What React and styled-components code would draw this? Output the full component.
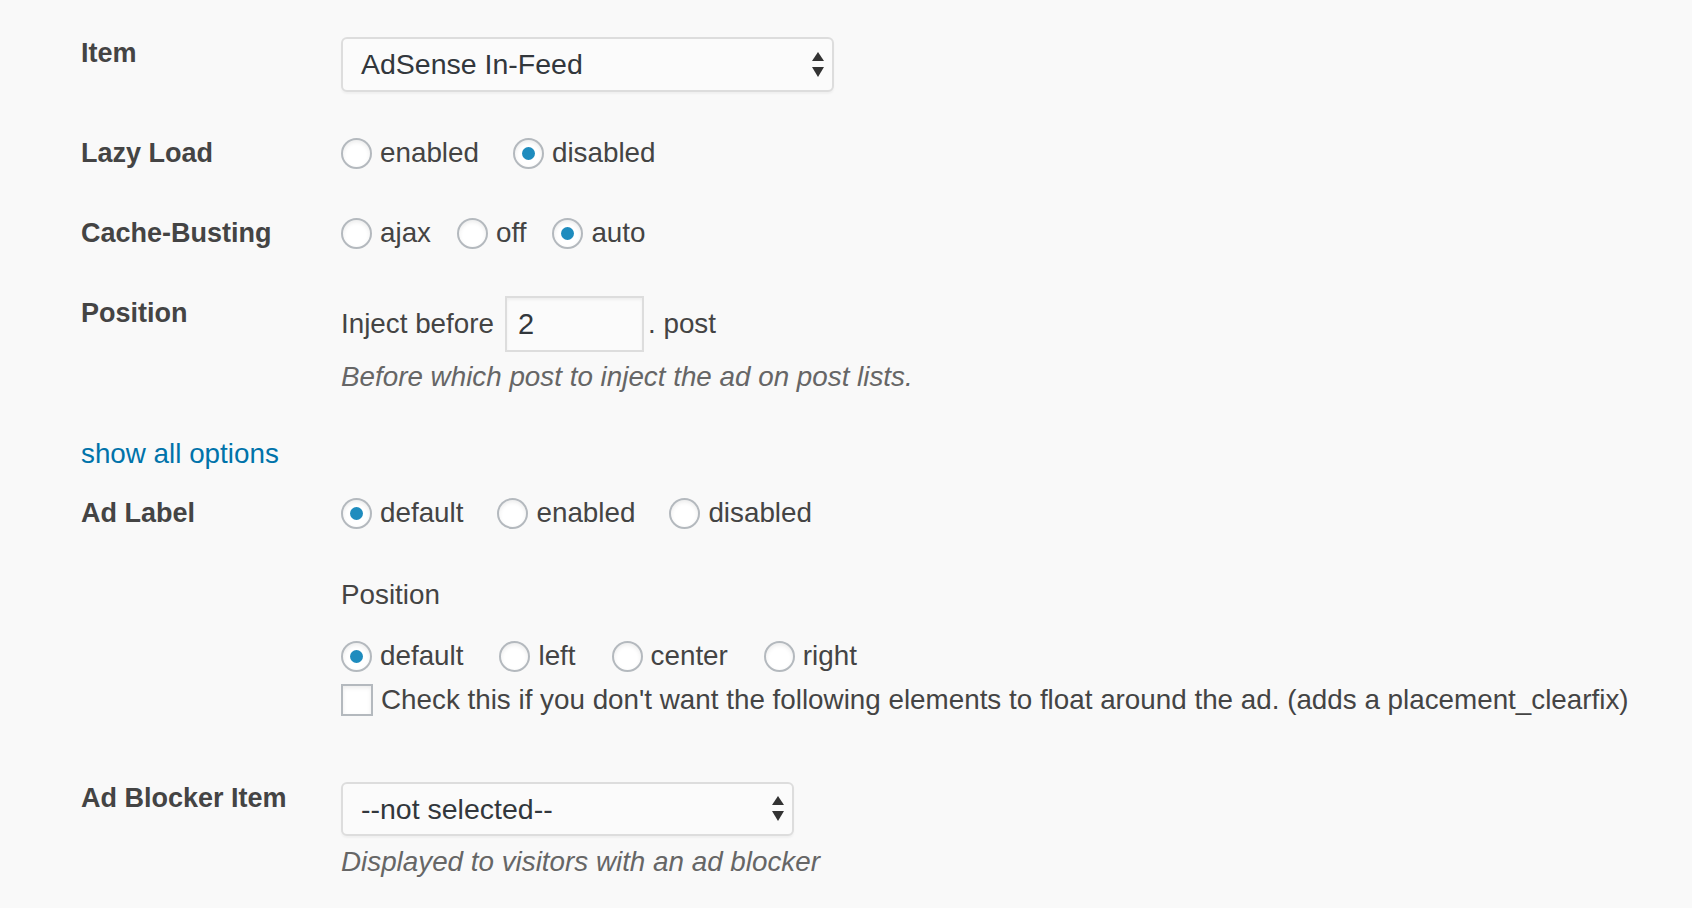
import React from "react";
import styled, { createGlobalStyle } from "styled-components";

const GlobalStyle = createGlobalStyle`
  body {
    margin: 0;
    background: #f9f9f9;
    font-family: "Liberation Sans", Arial, sans-serif;
    color: #444;
  }
`;

const Page = styled.div`
  padding: 33px 0 40px 81px;
`;

const Row = styled.div`
  display: flex;
  align-items: flex-start;
  margin-top: ${(p) => p.$top || 0}px;
`;

const Label = styled.div`
  width: 260px;
  flex-shrink: 0;
  font-size: 27px;
  font-weight: bold;
  line-height: 40px;
  color: #444;
`;

const Field = styled.div`
  display: flex;
  flex-direction: column;
`;

const Line = styled.div`
  display: flex;
  align-items: center;
  min-height: 40px;
  font-size: 27.8px;
  color: #444;
  margin-top: ${(p) => p.$top || 0}px;
`;

const SelectBox = styled.div`
  box-sizing: border-box;
  width: ${(p) => p.$width}px;
  height: ${(p) => p.$height || 55}px;
  margin-top: 4px;
  padding: 0 8px 0 18px;
  display: flex;
  align-items: center;
  justify-content: space-between;
  border: 2px solid #ddd;
  border-radius: 6px;
  background: #fbfbfb;
  box-shadow: 0 2px 2px rgba(0, 0, 0, 0.04);
  font-size: 28.5px;
  color: #32373c;
`;

const Arrows = () => (
  <svg width="12" height="26" viewBox="0 0 12 26">
    <polygon points="6,0 12,9 0,9" fill="#333" />
    <polygon points="0,15 12,15 6,25" fill="#333" />
  </svg>
);

const RadioLabel = styled.label`
  display: inline-flex;
  align-items: center;
  margin-right: ${(p) => p.$gap ?? 34}px;
`;

const Radio = styled.input.attrs({ type: "radio" })`
  appearance: none;
  box-sizing: border-box;
  width: 31px;
  height: 31px;
  margin: 0 8px 0 0;
  border: 2px solid #b4b9be;
  border-radius: 50%;
  background: #fff;
  box-shadow: inset 0 2px 4px rgba(0, 0, 0, 0.08);
  display: grid;
  place-content: center;

  &::before {
    content: "";
    width: 13px;
    height: 13px;
    border-radius: 50%;
    background: #1e8cbe;
    transform: scale(0);
  }
  &:checked::before {
    transform: scale(1);
  }
`;

const Checkbox = styled.input.attrs({ type: "checkbox" })`
  appearance: none;
  box-sizing: border-box;
  width: 32px;
  height: 32px;
  margin: 0 8px 0 0;
  border: 2px solid #b4b9be;
  background: #fff;
  box-shadow: inset 0 2px 4px rgba(0, 0, 0, 0.08);
`;

const NumberInput = styled.input`
  box-sizing: border-box;
  width: 139px;
  height: 56px;
  margin: 0 4px 0 11px;
  padding: 0 11px;
  border: 2px solid #ddd;
  background: #fbfbfb;
  box-shadow: inset 0 2px 3px rgba(0, 0, 0, 0.05);
  font-family: inherit;
  font-size: 29px;
  color: #32373c;
  outline: none;
`;

const Description = styled.p`
  margin: ${(p) => p.$top || 0}px 0 0;
  line-height: 40px;
  font-size: 27.8px;
  font-style: italic;
  color: #666;
`;

const Link = styled.a`
  font-size: 27.8px;
  line-height: 40px;
  color: #0073aa;
  text-decoration: none;
  cursor: pointer;
`;

const RadioGroup = ({ name, options, checked, gap }) => (
  <Line>
    {options.map((o) => (
      <RadioLabel key={o} $gap={gap}>
        <Radio name={name} defaultChecked={o === checked} />
        {o}
      </RadioLabel>
    ))}
  </Line>
);

export default function App() {
  return (
    <Page>
      <GlobalStyle />
      <Row>
        <Label>Item</Label>
        <Field>
          <SelectBox $width={493}>
            <span>AdSense In-Feed</span>
            <Arrows />
          </SelectBox>
        </Field>
      </Row>

      <Row $top={41}>
        <Label>Lazy Load</Label>
        <RadioGroup name="lazy" options={["enabled", "disabled"]} checked="disabled" />
      </Row>

      <Row $top={40}>
        <Label>Cache-Busting</Label>
        <RadioGroup name="cache" options={["ajax", "off", "auto"]} checked="auto" gap={26} />
      </Row>

      <Row $top={40}>
        <Label>Position</Label>
        <Field>
          <Line $top={3}>
            Inject before
            <NumberInput defaultValue="2" />. post
          </Line>
          <Description $top={5}>Before which post to inject the ad on post lists.</Description>
        </Field>
      </Row>

      <Row $top={37}>
        <Link>show all options</Link>
      </Row>

      <Row $top={19}>
        <Label>Ad Label</Label>
        <Field>
          <RadioGroup name="adlabel" options={["default", "enabled", "disabled"]} checked="default" />
          <Line $top={42}>Position</Line>
          <Line $top={21}>
            <RadioGroup
              name="labelpos"
              options={["default", "left", "center", "right"]}
              checked="default"
              gap={36}
            />
          </Line>
          <Line $top={4}>
            <RadioLabel $gap={0}>
              <Checkbox />
              Check this if you don't want the following elements to float around the ad. (adds a placement_clearfix)
            </RadioLabel>
          </Line>
        </Field>
      </Row>

      <Row $top={58}>
        <Label>Ad Blocker Item</Label>
        <Field>
          <SelectBox $width={453} $height={54}>
            <span>--not selected--</span>
            <Arrows />
          </SelectBox>
          <Description $top={6}>Displayed to visitors with an ad blocker</Description>
        </Field>
      </Row>
    </Page>
  );
}
